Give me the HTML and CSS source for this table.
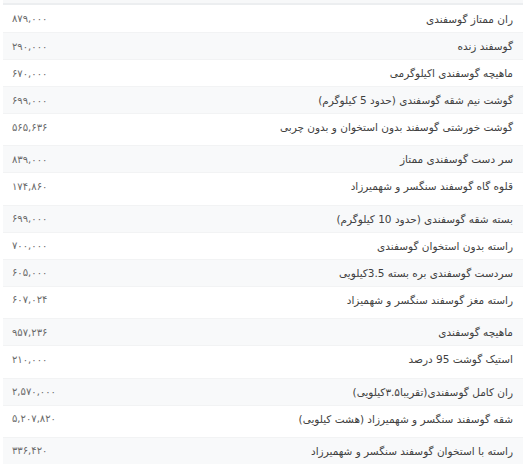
FILE: index.html
```html
<!DOCTYPE html>
<html lang="fa" dir="rtl">
<head>
<meta charset="utf-8">
<title>قیمت گوشت گوسفندی</title>
<link rel="stylesheet" href="styles.css">
</head>
<body>
<div class="table">
  <div class="head"></div>
  <div class="row"><span class="name">ران ممتاز گوسفندی</span><span class="price" dir="ltr">۸۷۹,۰۰۰</span></div>
  <div class="row alt"><span class="name">گوسفند زنده</span><span class="price" dir="ltr">۲۹۰,۰۰۰</span></div>
  <div class="row"><span class="name">ماهیچه گوسفندی اکیلوگرمی</span><span class="price" dir="ltr">۶۷۰,۰۰۰</span></div>
  <div class="row alt"><span class="name">گوشت نیم شقه گوسفندی (حدود 5 کیلوگرم)</span><span class="price" dir="ltr">۶۹۹,۰۰۰</span></div>
  <div class="row tall"><span class="name">گوشت خورشتی گوسفند بدون استخوان و بدون چربی</span><span class="price" dir="ltr">۵۶۵,۶۳۶</span></div>
  <div class="row alt"><span class="name">سر دست گوسفندی ممتاز</span><span class="price" dir="ltr">۸۳۹,۰۰۰</span></div>
  <div class="row tall"><span class="name">قلوه گاه گوسفند سنگسر و شهمیرزاد</span><span class="price" dir="ltr">۱۷۴,۸۶۰</span></div>
  <div class="row alt"><span class="name">بسته شقه گوسفندی (حدود 10 کیلوگرم)</span><span class="price" dir="ltr">۶۹۹,۰۰۰</span></div>
  <div class="row"><span class="name">راسته بدون استخوان گوسفندی</span><span class="price" dir="ltr">۷۰۰,۰۰۰</span></div>
  <div class="row alt"><span class="name">سردست گوسفندی بره بسته 3.5کیلویی</span><span class="price" dir="ltr">۶۰۵,۰۰۰</span></div>
  <div class="row tall"><span class="name">راسته مغز گوسفند سنگسر و شهمیزاد</span><span class="price" dir="ltr">۶۰۷,۰۲۴</span></div>
  <div class="row alt"><span class="name">ماهیچه گوسفندی</span><span class="price" dir="ltr">۹۵۷,۲۳۶</span></div>
  <div class="row tall"><span class="name">استیک گوشت 95 درصد</span><span class="price" dir="ltr">۲۱۰,۰۰۰</span></div>
  <div class="row alt"><span class="name">ران کامل گوسفندی(تقریبا۳.۵کیلویی)</span><span class="price" dir="ltr">۲,۵۷۰,۰۰۰</span></div>
  <div class="row tall"><span class="name">شقه گوسفند سنگسر و شهمیرزاد (هشت کیلویی)</span><span class="price" dir="ltr">۵,۲۰۷,۸۲۰</span></div>
  <div class="row alt"><span class="name">راسته با استخوان گوسفند سنگسر و شهمیرزاد</span><span class="price" dir="ltr">۳۳۶,۴۲۰</span></div>
</div>
</body>
</html>
```

FILE: styles.css
```css
html, body {
  margin: 0;
  padding: 0;
  background: #ffffff;
}

body {
  font-family: "DejaVu Sans", "Noto Sans", sans-serif;
  color: #4a4a4a;
  overflow: hidden;
}

.table {
  display: flex;
  flex-direction: column;
  margin-left: 3px;
}

.head {
  height: 3px;
  background: #f7f8f9;
  border-bottom: 2px solid #eceef0;
}

.row {
  display: flex;
  justify-content: space-between;
  align-items: center;
  height: 27px;
  box-sizing: border-box;
  padding: 0 10px 0 9px;
  border-top: 1px solid #f2f3f4;
}

.row:nth-child(2) {
  border-top: none;
}

.row.alt {
  background: #f8f9fa;
}

.row.tall {
  height: 32.4px;
  padding-bottom: 5.4px;
}

.name {
  font-size: 10.5px;
  color: #3f3f3f;
  white-space: nowrap;
}

.price {
  font-size: 10px;
  color: #6a6a6a;
  white-space: nowrap;
}
```
